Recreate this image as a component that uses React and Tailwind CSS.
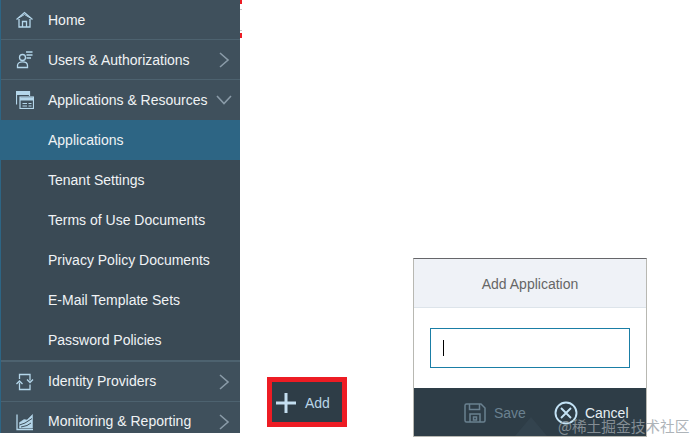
import React from "react";

const font = { fontFamily: '"Liberation Sans", Arial, sans-serif' };

const HomeIcon = () => (
  <svg width="18" height="18" viewBox="0 0 18 18" fill="none" stroke="#b4d6ea" strokeWidth="1.3">
    <path d="M0.500 8.500 L8.500 1.500 L16.500 8.500" />
    <path d="M3 6.800 L8.500 3.500 L14 6.800" strokeWidth="1" />
    <path d="M3 8 V16 H14 V8" />
    <path d="M6.500 16 V10.500 H10.500 V16" />
  </svg>
);

const UsersIcon = () => (
  <svg width="18" height="18" viewBox="0 0 18 18" fill="none" stroke="#b4d6ea" strokeWidth="1.3">
    <circle cx="6.500" cy="6.500" r="3" />
    <path d="M1.500 16.500 V14.500 C1.500 12 4 10.800 6.500 10.800 C9 10.800 11.500 12 11.500 14.500 V16.500 Z" />
    <path d="M10 1 H16.500 M10.500 4 H16.500 M10.500 7 H15" />
  </svg>
);

const AppsIcon = () => (
  <svg width="18" height="18" viewBox="0 0 18 18" fill="none" stroke="#b4d6ea" strokeWidth="1.2">
    <path d="M0.500 13.500 V0.500 H13.500 V5" />
    <path d="M0.500 2.500 H13.500" strokeWidth="3" />
    <rect x="4" y="6" width="13.500" height="11.500" fill="#3f505c" />
    <path d="M4 8 H17.500" strokeWidth="3" />
    <path d="M6.500 12.500 H11 M12.500 12.500 H15.500 M6.500 15 H11 M12.500 15 H15.500" strokeWidth="1" />
  </svg>
);

const ProvidersIcon = () => (
  <svg width="18" height="18" viewBox="0 0 18 18" fill="none" stroke="#b4d6ea" strokeWidth="1.3">
    <path d="M3.500 6 V1.500 H14 V7.500" />
    <path d="M11 6.500 L14 9.500 L17 6.500" />
    <path d="M14 11.500 V16.500 H3.500 V9.500" />
    <path d="M0.500 11 L3.500 8 L6.500 11" />
  </svg>
);

const ChartIcon = () => (
  <svg width="18" height="18" viewBox="0 0 18 18" fill="none" stroke="#b4d6ea" strokeWidth="1.3">
    <path d="M1 1.500 V16.500 H17" />
    <path d="M3.500 15 V9.500 L8 6.500 L11 7 L16.500 1.500 V15 Z" fill="#b4d6ea" strokeWidth="0.500" />
    <path d="M3.500 12 L9 10 L16 5.500 M5 14 L11 12.500 L15 10" stroke="#3f505c" strokeWidth="1" />
  </svg>
);

const ChevronRight = () => (
  <svg width="12" height="16" viewBox="0 0 12 16" fill="none" stroke="#8a9ba8" strokeWidth="1.600">
    <path d="M2 1 L10 8 L2 15" />
  </svg>
);

const ChevronDown = () => (
  <svg width="16" height="10" viewBox="0 0 16 10" fill="none" stroke="#8a9ba8" strokeWidth="1.600">
    <path d="M1 1 L8 8.500 L15 1" />
  </svg>
);

const NavRow = ({ icon, label, chevron, className }) => (
  <div className={`flex items-center h-10 pl-[15px] border-b border-[#4d626f] text-[14px] text-[#f0f3f5] ${className || ""}`}>
    <div className="w-8 shrink-0 flex items-center">{icon}</div>
    <span className="flex-1 whitespace-nowrap">{label}</span>
    <div className="w-8 shrink-0 flex items-center justify-center">{chevron}</div>
  </div>
);

const SubRow = ({ label, active }) => (
  <div className={`flex items-center h-10 pl-[47px] text-[14px] text-[#f0f3f5] whitespace-nowrap ${active ? "bg-[#2d6584]" : ""}`}>
    {label}
  </div>
);

const subItems = [
  "Applications",
  "Tenant Settings",
  "Terms of Use Documents",
  "Privacy Policy Documents",
  "E-Mail Template Sets",
  "Password Policies",
];

export default function App() {
  return (
    <div className="relative flex w-[695px] h-[440px] bg-white overflow-hidden" style={font}>
      <aside className="w-[240px] h-[433px] shrink-0 bg-[#3f505c] border-l border-[#2d6584] overflow-hidden">
        <NavRow icon={<HomeIcon />} label="Home" className="pt-px" />
        <NavRow icon={<UsersIcon />} label="Users & Authorizations" chevron={<ChevronRight />} className="pt-px" />
        <NavRow icon={<AppsIcon />} label="Applications & Resources" chevron={<ChevronDown />} className="border-b-0" />
        <div className="bg-[#3a4a55] border-b-2 border-[#4d626f]">
          {subItems.map((s, i) => (
            <SubRow key={s} label={s} active={i === 0} />
          ))}
        </div>
        <NavRow icon={<ProvidersIcon />} label="Identity Providers" chevron={<ChevronRight />} />
        <NavRow icon={<ChartIcon />} label="Monitoring & Reporting" chevron={<ChevronRight />} />
      </aside>

      <div className="flex flex-col h-[38px] w-[2px] shrink-0">
        <div className="h-[4px] bg-[#ed1c24]" />
        <div className="h-px mt-[5px] bg-[#c4c4c4]" />
        <div className="h-px mt-[20px] bg-[#c4c4c4]" />
        <div className="h-[5px] mt-auto bg-[#ed1c24]" />
      </div>

      <div className="ml-[25px] mb-[13px] border-[5px] border-[#ed1c24] w-[80px] h-[50px] bg-[#2e3d47] self-end shrink-0">
        <div className="flex items-center w-full h-full pl-[3px] pt-[2px] text-[14px] text-[#b9d6e8]">
          <svg width="22" height="22" viewBox="0 0 22 22" stroke="#c3def0" strokeWidth="3" fill="none">
            <path d="M11 1 V21 M1 11 H21" />
          </svg>
          <span className="ml-[8px]">Add</span>
        </div>
      </div>

      <div className="flex flex-col w-[234px] h-[179px] ml-[66px] mb-[3px] self-end border border-[#b8b8b2] border-t-[#66666a] bg-white shrink-0">
        <div className="flex items-center justify-center h-[49px] pt-[2px] bg-[#eff2f7] border-b border-[#dde4ea] text-[14px] text-[#666]">
          Add Application
        </div>
        <div className="flex-1 px-4 pt-[20px]">
          <div className="flex items-center h-[40px] border border-[#1a7ea6] pl-3">
            <div className="w-px h-[16px] bg-black" />
          </div>
        </div>
        <div className="relative flex items-center h-[48px] pt-[2px] bg-[#2e3d47] pl-[50px] text-[14px]">
          <svg className="absolute left-[101px] top-[29px]" width="32" height="19" viewBox="0 0 32 19">
            <path d="M0 19 L16 0 L32 19 Z" fill="#33434e" />
          </svg>
          <svg className="relative" width="22" height="20" viewBox="0 0 22 20" fill="none" stroke="#6a8190" strokeWidth="1.500">
            <path d="M1 2.500 Q1 1 2.500 1 H17 L21 5 V17.500 Q21 19 19.500 19 H2.500 Q1 19 1 17.500 Z" />
            <path d="M5.500 1 V6.500 H15.500 V1" />
            <path d="M6 19 V11 H16 V19" />
            <path d="M9.500 14 H12.500 V17 H9.500 Z" />
          </svg>
          <span className="relative ml-[8px] text-[#6a8190]">Save</span>
          <svg className="relative ml-[28px]" width="24" height="24" viewBox="0 0 24 24" fill="none" stroke="#c3e2f5" strokeWidth="1.900">
            <circle cx="12" cy="12" r="10.500" />
            <path d="M7 7 L17 17 M17 7 L7 17" />
          </svg>
          <span className="relative ml-[7px] text-[#e6eef3]">Cancel</span>
        </div>
      </div>

      <span
        className="absolute left-[558px] top-[417px] text-[14.700px] leading-[18px] text-[#9aa2a8] opacity-80 whitespace-nowrap"
        style={{ fontFamily: '"Noto Sans CJK SC", sans-serif' }}
      >
        @稀土掘金技术社区
      </span>
    </div>
  );
}
